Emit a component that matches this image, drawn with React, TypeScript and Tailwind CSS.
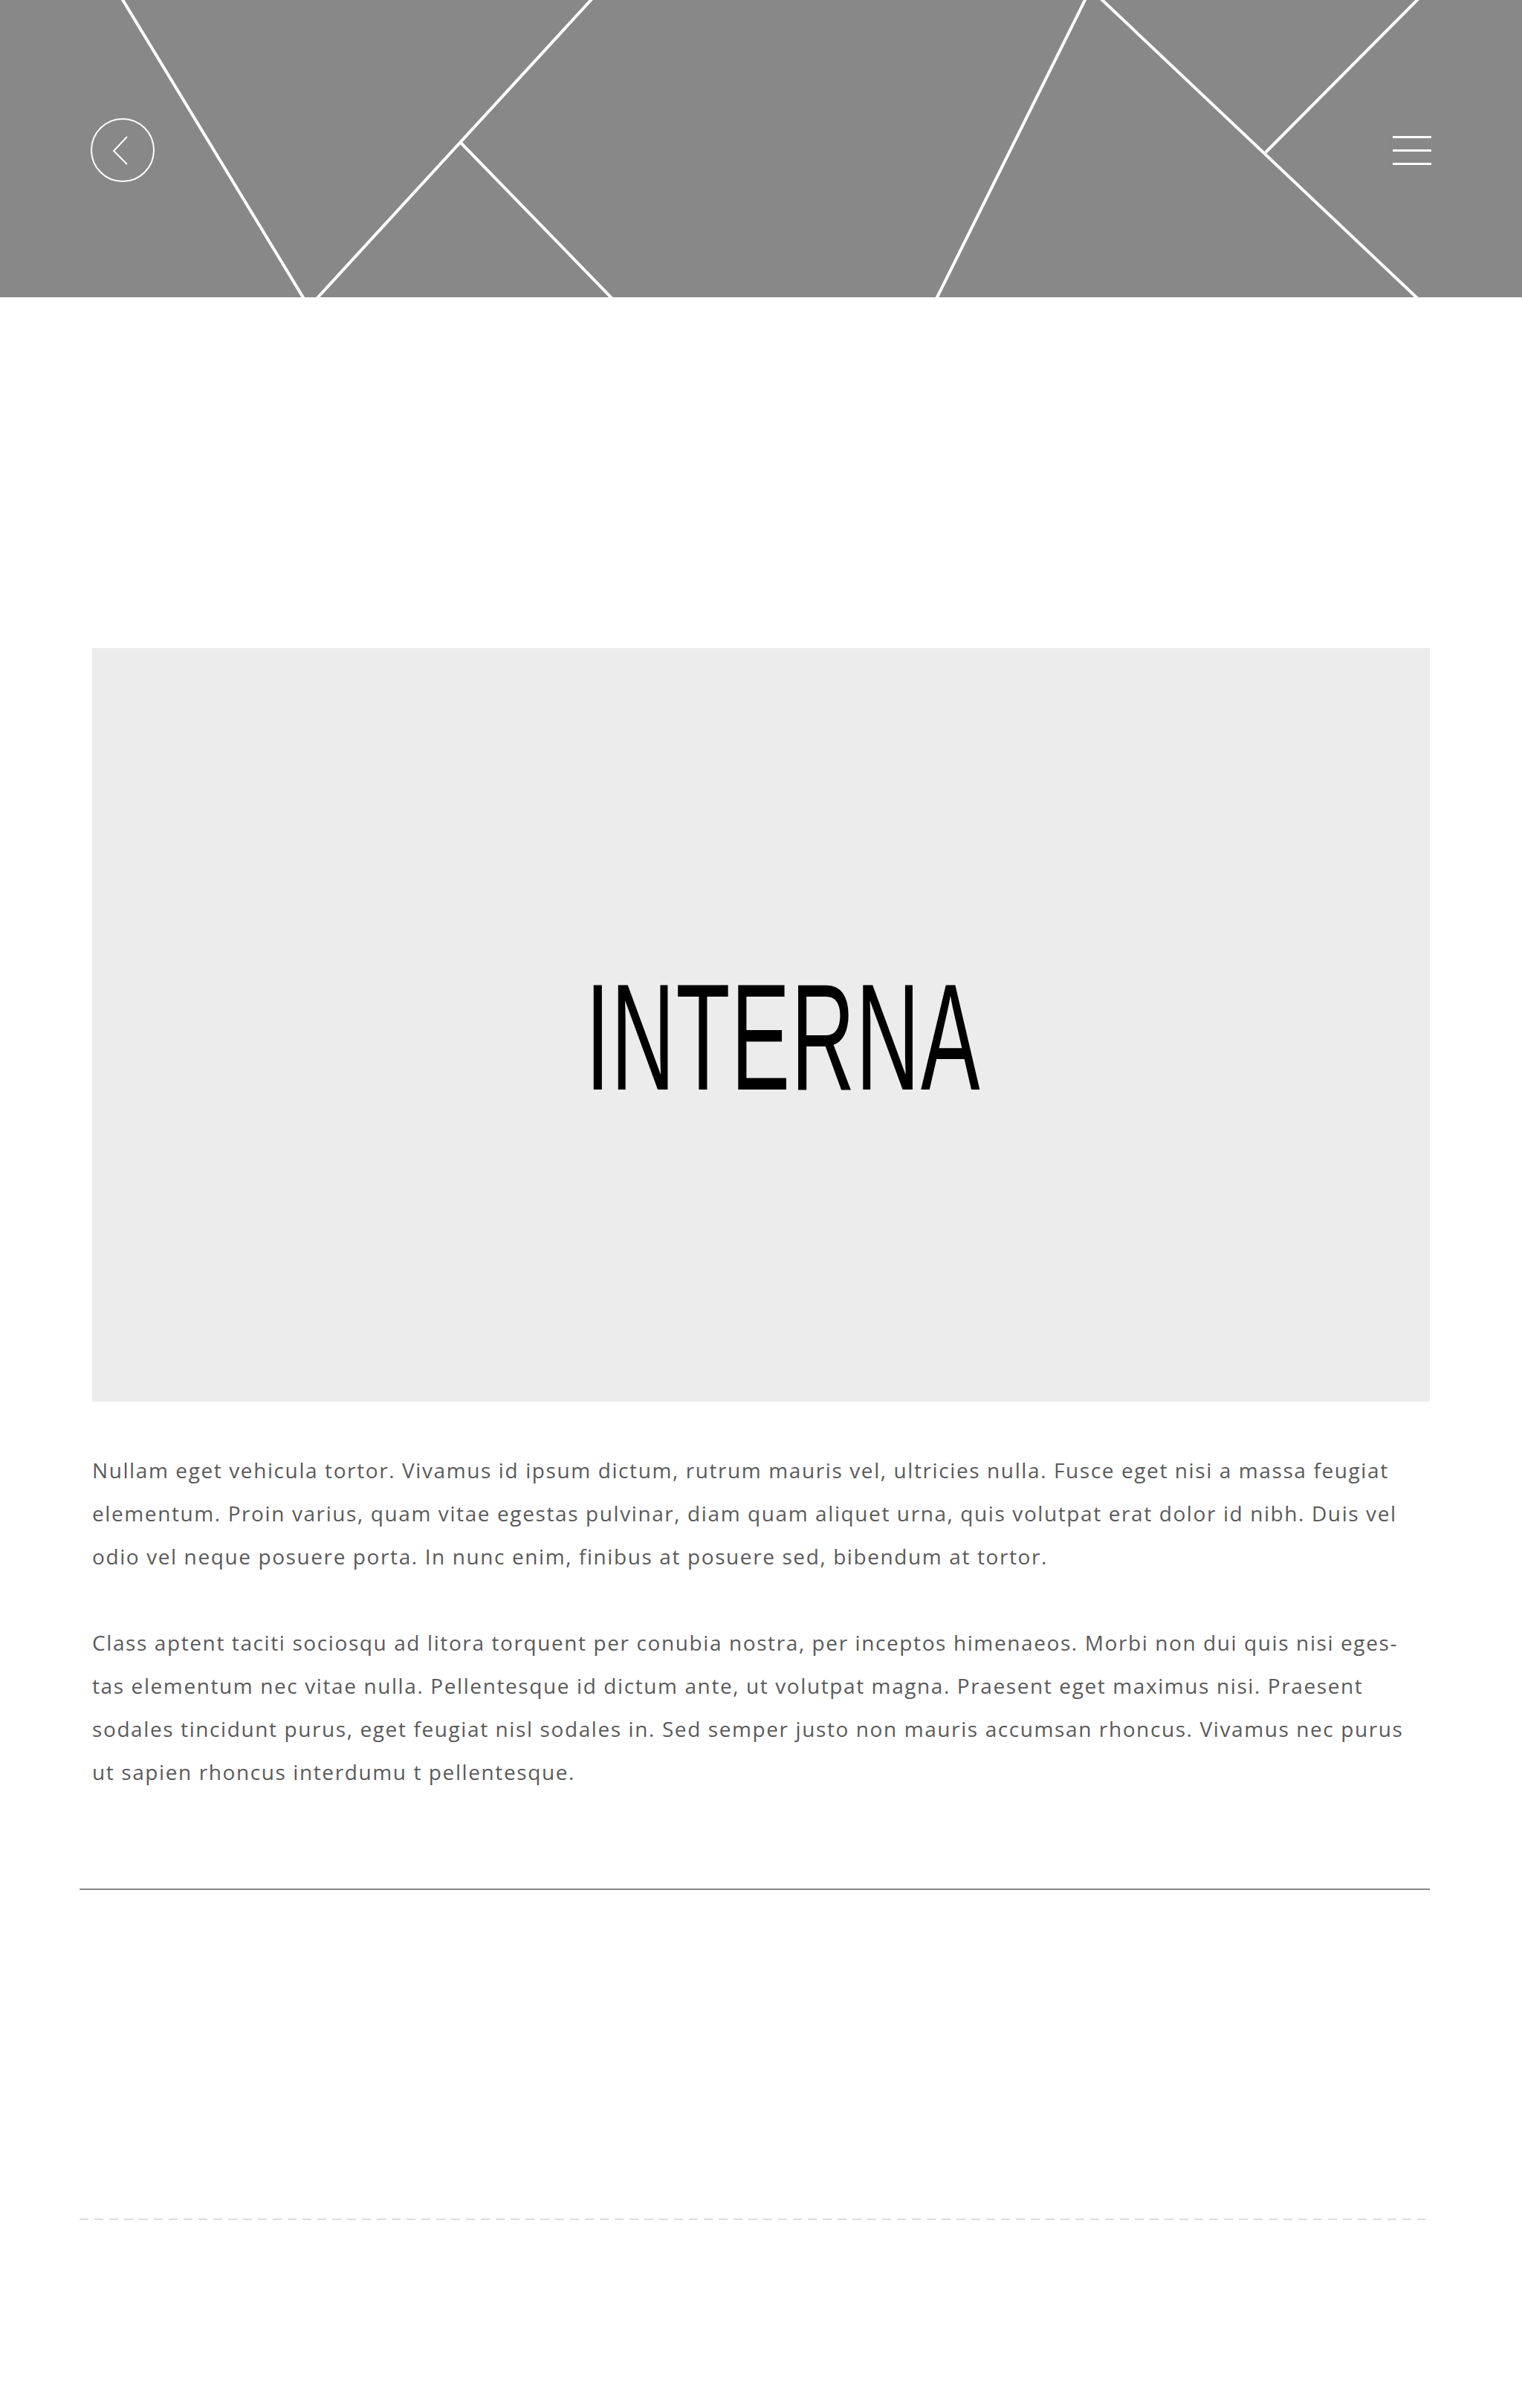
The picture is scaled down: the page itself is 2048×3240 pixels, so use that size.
import { ReactNode } from 'react';

function BackButton() {
  return (
    <button className="w-[86px] h-[86px] flex items-center justify-center" aria-label="Back">
      <svg width="86" height="86" viewBox="0 0 86 86" fill="none" stroke="white">
        <circle cx="43" cy="43" r="42" strokeWidth="2" />
        <polyline points="49,25 31,44 49,62" strokeWidth="2" />
      </svg>
    </button>
  );
}

function MenuButton() {
  return (
    <button className="w-[52px] flex flex-col gap-[15px]" aria-label="Menu">
      <span className="block h-[3px] bg-white" />
      <span className="block h-[3px] bg-white" />
      <span className="block h-[3px] bg-white" />
    </button>
  );
}

function Header() {
  return (
    <header className="relative h-[400px] bg-[#888888] overflow-hidden">
      {/* decorative line pattern */}
      <svg className="absolute inset-0" width="2048" height="400" viewBox="0 0 2048 400" fill="none" stroke="white" strokeWidth="4">
        <line x1="164" y1="-2" x2="409" y2="402" />
        <line x1="797" y1="-2" x2="426" y2="402" />
        <line x1="620" y1="192" x2="824" y2="402" />
        <line x1="1461" y1="-2" x2="1260" y2="402" />
        <line x1="1481" y1="-2" x2="1908" y2="402" />
        <line x1="1909" y1="-2" x2="1703" y2="205" />
      </svg>
      <div className="relative h-full mx-auto w-[1804px] flex items-center justify-between pt-[4px]">
        <BackButton />
        <MenuButton />
      </div>
    </header>
  );
}

function Paragraph({ lines }: { lines: ReactNode[] }) {
  return (
    <p className="text-[28px] leading-[58px] tracking-[1.6px] text-[#5a5a5a]">
      {lines.map((line, i) => (
        <span key={i} className="block whitespace-nowrap">{line}</span>
      ))}
    </p>
  );
}

export default function App() {
  return (
    <div className="min-h-[3240px] bg-white" style={{ fontFamily: '"Open Sans", "Liberation Sans", sans-serif' }}>
      <Header />

      <main className="w-[1800px] mx-auto">
        <section className="mt-[472px] h-[1014px] bg-[#ececec] flex items-center justify-center pl-[60px] pt-[32px]">
          <h1
            className="text-[204px] leading-none text-black font-normal scale-x-[0.585] tracking-[2px]"
            style={{ fontFamily: '"Liberation Sans", Arial, sans-serif' }}
          >
            INTERNA
          </h1>
        </section>

        <div className="mt-[63px] flex flex-col gap-[58px]">
          <Paragraph
            lines={[
              'Nullam eget vehicula tortor. Vivamus id ipsum dictum, rutrum mauris vel, ultricies nulla. Fusce eget nisi a massa feugiat',
              'elementum. Proin varius, quam vitae egestas pulvinar, diam quam aliquet urna, quis volutpat erat dolor id nibh. Duis vel',
              'odio vel neque posuere porta. In nunc enim, finibus at posuere sed, bibendum at tortor.',
            ]}
          />
          <Paragraph
            lines={[
              'Class aptent taciti sociosqu ad litora torquent per conubia nostra, per inceptos himenaeos. Morbi non dui quis nisi eges-',
              'tas elementum nec vitae nulla. Pellentesque id dictum ante, ut volutpat magna. Praesent eget maximus nisi. Praesent',
              'sodales tincidunt purus, eget feugiat nisl sodales in. Sed semper justo non mauris accumsan rhoncus. Vivamus nec purus',
              'ut sapien rhoncus interdumu t pellentesque.',
            ]}
          />
        </div>

        <hr className="mt-[128px] -ml-[17px] border-0 h-[2px] bg-[#888888]" />

        <div className="mt-[442px] -ml-[17px] h-[2px] bg-[repeating-linear-gradient(to_right,#dddddd_0_12px,transparent_12px_20px)]" />
      </main>
    </div>
  );
}
